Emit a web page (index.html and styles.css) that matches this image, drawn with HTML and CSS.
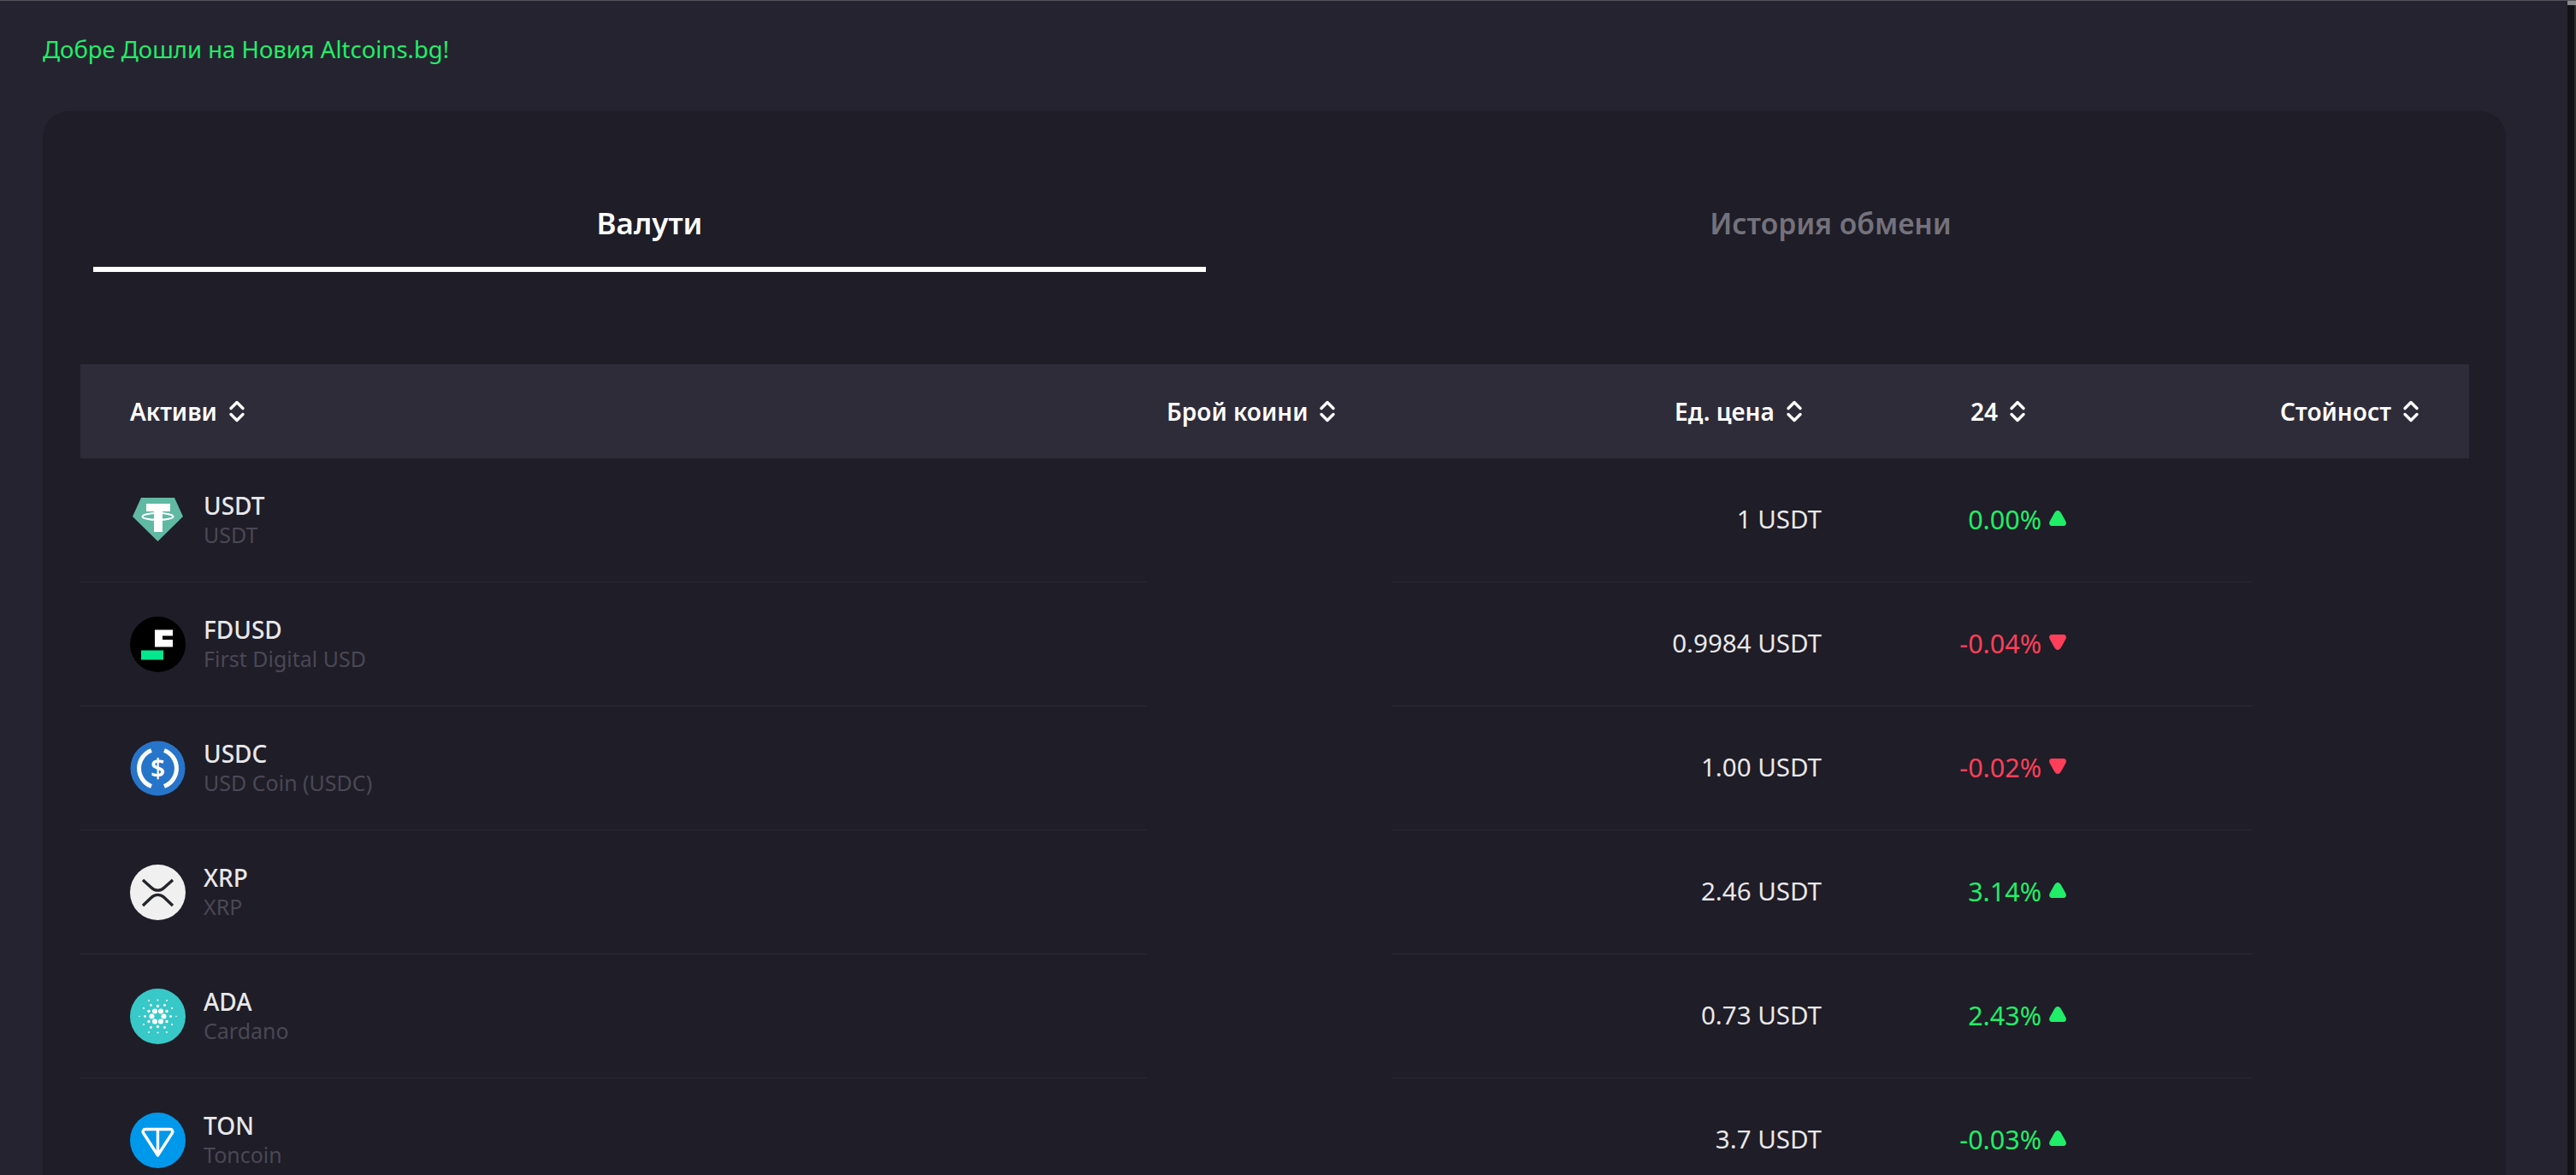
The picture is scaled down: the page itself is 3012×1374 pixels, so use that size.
FILE: index.html
```html
<!DOCTYPE html>
<html lang="bg">
<head>
<meta charset="utf-8">
<title>Altcoins.bg</title>
<link rel="stylesheet" href="styles.css">
</head>
<body>
<svg class="defs" width="0" height="0" aria-hidden="true">
  <symbol id="sort" viewBox="0 0 20 26"><path d="M3 9.500 10 2.500l7 7M3 16.500l7 7 7-7" fill="none" stroke="#fff" stroke-width="3.400" stroke-linecap="round" stroke-linejoin="round"/></symbol>
  <symbol id="tri-up" viewBox="0 0 20 18"><path d="M10 0C12 0 13 1.500 14 3l5 9c2 3 .5 6-2 6H3C.5 18-1 15 1 12L6 3C7 1.500 8 0 10 0z" fill="currentColor"/></symbol>
  <symbol id="tri-down" viewBox="0 0 20 18"><path d="M10 18C12 18 13 16.500 14 15l5-9c2-3 .5-6-2-6H3C.5 0-1 3 1 6l5 9C7 16.500 8 18 10 18z" fill="currentColor"/></symbol>
</svg>
<main class="page">
  <p class="welcome">Добре Дошли на Новия Altcoins.bg!</p>
  <section class="card">
    <nav class="tabs">
      <a class="tab tab-active">Валути</a>
      <a class="tab tab-muted">История обмени</a>
    </nav>
    <div class="table">
      <div class="head">
        <div class="th th-asset">Активи <svg class="sort"><use href="#sort"/></svg></div>
        <div class="th th-count">Брой коини <svg class="sort"><use href="#sort"/></svg></div>
        <div class="th th-price">Ед. цена <svg class="sort"><use href="#sort"/></svg></div>
        <div class="th th-change">24 <svg class="sort"><use href="#sort"/></svg></div>
        <div class="th th-value">Стойност <svg class="sort"><use href="#sort"/></svg></div>
      </div>

      <div class="row">
        <div class="td asset">
          <svg class="coin" viewBox="0 0 65 65"><path d="M13 6h39l10 22-29.500 29L3 28z" fill="#60b9a3"/><path d="M19 13h28v9H38v24H28V22h-9z" fill="#fff"/><ellipse cx="32.500" cy="28" rx="18" ry="4" fill="none" stroke="#fff" stroke-width="2"/></svg>
          <div class="names"><span class="sym">USDT</span><span class="full">USDT</span></div>
        </div>
        <div class="td blank"></div>
        <div class="td price">1 USDT</div>
        <div class="td change up">0.00% <svg class="tri"><use href="#tri-up"/></svg></div>
        <div class="td blank"></div>
      </div>

      <div class="row">
        <div class="td asset">
          <svg class="coin" viewBox="0 0 65 65"><circle cx="32.500" cy="32.500" r="32.500" fill="#000"/><path d="M29 15.500h21v7H38v4.500h12v8.500H29z" fill="#fff"/><rect x="13" y="39.500" width="26" height="11" fill="#02e88f"/></svg>
          <div class="names"><span class="sym">FDUSD</span><span class="full">First Digital USD</span></div>
        </div>
        <div class="td blank"></div>
        <div class="td price">0.9984 USDT</div>
        <div class="td change down">-0.04% <svg class="tri"><use href="#tri-down"/></svg></div>
        <div class="td blank"></div>
      </div>

      <div class="row">
        <div class="td asset">
          <svg class="coin" viewBox="0 0 65 65"><circle cx="32.500" cy="32.500" r="32" fill="#2775ca"/><path d="M25 11.500a22.500 22.500 0 0 0 0 42M40 11.500a22.500 22.500 0 0 1 0 42" fill="none" stroke="#fff" stroke-width="5"/><text class="usdc-mark" x="32.500" y="43" text-anchor="middle">$</text></svg>
          <div class="names"><span class="sym">USDC</span><span class="full">USD Coin (USDC)</span></div>
        </div>
        <div class="td blank"></div>
        <div class="td price">1.00 USDT</div>
        <div class="td change down">-0.02% <svg class="tri"><use href="#tri-down"/></svg></div>
        <div class="td blank"></div>
      </div>

      <div class="row">
        <div class="td asset">
          <svg class="coin" viewBox="0 0 65 65"><circle cx="32.500" cy="32.500" r="32.500" fill="#f0f0f0"/><path d="M15 18l10 9a10.500 10.500 0 0 0 15 0l10-9M15 48l10-9.500a10.500 10.500 0 0 1 15 0L50 48" fill="none" stroke="#23252b" stroke-width="3.400"/></svg>
          <div class="names"><span class="sym">XRP</span><span class="full">XRP</span></div>
        </div>
        <div class="td blank"></div>
        <div class="td price">2.46 USDT</div>
        <div class="td change up">3.14% <svg class="tri"><use href="#tri-up"/></svg></div>
        <div class="td blank"></div>
      </div>

      <div class="row">
        <div class="td asset">
          <svg class="coin" viewBox="0 0 65 65"><circle cx="32.500" cy="32.500" r="32.500" fill="#39c8c8"/>
            <g fill="#fff">
              <circle cx="29" cy="26.500" r="3"/><circle cx="36" cy="26.500" r="3"/><circle cx="25.500" cy="32.500" r="3"/><circle cx="39.500" cy="32.500" r="3"/><circle cx="29" cy="38.500" r="3"/><circle cx="36" cy="38.500" r="3"/>
              <circle cx="32.500" cy="20.500" r="1.700"/><circle cx="32.500" cy="44.500" r="1.700"/><circle cx="22" cy="26.500" r="1.700"/><circle cx="43" cy="26.500" r="1.700"/><circle cx="22" cy="38.500" r="1.700"/><circle cx="43" cy="38.500" r="1.700"/>
              <circle cx="17.500" cy="32.500" r="1.400"/><circle cx="47.500" cy="32.500" r="1.400"/><circle cx="24.500" cy="19.500" r="1.400"/><circle cx="40.500" cy="19.500" r="1.400"/><circle cx="24.500" cy="45.500" r="1.400"/><circle cx="40.500" cy="45.500" r="1.400"/>
              <circle cx="32.500" cy="13.500" r="1"/><circle cx="32.500" cy="51.500" r="1"/><circle cx="16" cy="23" r="1.100"/><circle cx="49" cy="23" r="1.100"/><circle cx="16" cy="42" r="1.100"/><circle cx="49" cy="42" r="1.100"/>
              <circle cx="11" cy="32.500" r=".8"/><circle cx="54" cy="32.500" r=".8"/><circle cx="22" cy="14" r=".9"/><circle cx="43" cy="14" r=".9"/><circle cx="22" cy="51" r=".9"/><circle cx="43" cy="51" r=".9"/>
            </g></svg>
          <div class="names"><span class="sym">ADA</span><span class="full">Cardano</span></div>
        </div>
        <div class="td blank"></div>
        <div class="td price">0.73 USDT</div>
        <div class="td change up">2.43% <svg class="tri"><use href="#tri-up"/></svg></div>
        <div class="td blank"></div>
      </div>

      <div class="row">
        <div class="td asset">
          <svg class="coin" viewBox="0 0 65 65"><circle cx="32.500" cy="32.500" r="32.500" fill="#0098ea"/><path d="M18 19.500h29c2.500 0 3.500 2.500 2.300 4.500L32.500 50 15.700 24c-1.200-2 -.2-4.500 2.300-4.500zM32.500 19.500V50" fill="none" stroke="#fff" stroke-width="3.400" stroke-linejoin="round"/></svg>
          <div class="names"><span class="sym">TON</span><span class="full">Toncoin</span></div>
        </div>
        <div class="td blank"></div>
        <div class="td price">3.7 USDT</div>
        <div class="td change up">-0.03% <svg class="tri"><use href="#tri-up"/></svg></div>
        <div class="td blank"></div>
      </div>
    </div>
  </section>
</main>
<aside class="scrollbar"><div class="thumb"></div></aside>
</body>
</html>
```
FILE: styles.css
```css
* { box-sizing: border-box; }
html, body { margin: 0; height: 100%; overflow: hidden; }
body {
  display: flex;
  background: #262330;
  color: #fff;
  font-family: "Noto Sans", "Open Sans", sans-serif;
  border-top: 1px solid #55545c;
}
.defs { position: absolute; }
.page { flex: 1; min-width: 0; padding: 0 72px 0 50px; }
.scrollbar {
  width: 10px;
  margin-top: -1px;
  background: #121217;
  border-right: 2px solid #2e2e33;
}
.thumb { width: 10px; height: 6px; background: #8a8a8c; }
.welcome {
  margin: 0;
  height: 129px;
  padding-top: 37px;
  font-size: 27.5px;
  line-height: 40px;
  color: #20ee68;
}
.card {
  background: #1f1d27;
  border-radius: 30px 30px 0 0;
  padding: 0 43px 0 44px;
  min-height: 1300px;
}
.tabs {
  display: flex;
  gap: 80px;
  padding: 77px 96px 0 15px;
  height: 296px;
}
.tab {
  flex: 1;
  height: 111px;
  text-align: center;
  font-size: 35px;
  font-weight: 600;
  line-height: 108px;
}
.tab-active { color: #fff; border-bottom: 6px solid #fff; }
.tab-muted { color: #74727c; font-size: 33.6px; }
.head {
  display: flex;
  height: 110px;
  background: #2f2c3a;
  align-items: center;
  font-size: 28px;
  font-weight: 600;
}
.th { display: flex; align-items: center; gap: 13px; white-space: nowrap; }
.th-asset { width: 1270px; padding-left: 58px; }
.th-count { width: 594px; }
.th-price { width: 346px; }
.th-change { width: 362px; }
.sort { width: 20px; height: 26px; }
.row {
  display: grid;
  height: 145px;
  grid-template-columns: 1247px 286px 503px 504px 253px;
}
.td { display: flex; align-items: center; font-size: 29.5px; }
.asset, .price, .change { border-bottom: 1px solid #2c2a35; }
.asset { padding-left: 58px; gap: 21px; }
.coin { width: 65px; height: 65px; flex: none; }
.names { display: flex; flex-direction: column; margin-bottom: 3px; }
.sym { font-size: 28px; line-height: 36px; font-weight: 500; color: #e8e8ea; }
.full { font-size: 25px; line-height: 32px; color: #4a4855; }
.price { justify-content: flex-end; padding-bottom: 3px; color: #e8e8ea; }
.change { justify-content: flex-end; padding: 0 218px 3px 0; gap: 9px; font-size: 30.5px; }
.up { color: #20ee68; }
.down { color: #ff3f5a; }
.tri { width: 20px; height: 18px; margin-bottom: 2px; }
.usdc-mark { font-size: 30px; font-weight: 600; fill: #fff; }
```
